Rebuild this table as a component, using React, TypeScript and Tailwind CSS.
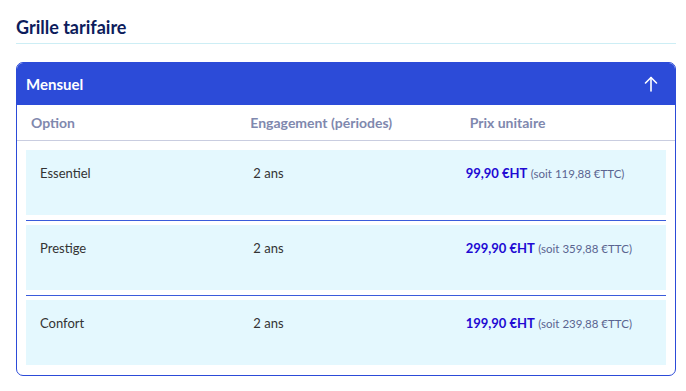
import React from "react";

type Row = { name: string; term: string; ht: string; ttc: string };

const rows: Row[] = [
  { name: "Essentiel", term: "2 ans", ht: "99,90 €HT", ttc: "(soit 119,88 €TTC)" },
  { name: "Prestige", term: "2 ans", ht: "299,90 €HT", ttc: "(soit 359,88 €TTC)" },
  { name: "Confort", term: "2 ans", ht: "199,90 €HT", ttc: "(soit 239,88 €TTC)" },
];

function ArrowUp() {
  return (
    <svg width="14" height="16" viewBox="0 0 14 16" fill="none" stroke="white" strokeWidth="1.6" strokeLinecap="round" strokeLinejoin="round">
      <path d="M7 15V1.5" />
      <path d="M1.5 7L7 1.5L12.5 7" />
    </svg>
  );
}

export default function App() {
  return (
    <div className="w-[686px] h-[391px] bg-white pl-4 pr-[10px] pt-[14px] font-['Lato',sans-serif]">
      <h2 className="text-[18px] leading-[26px] font-bold text-[#0d1c5c] pb-[3px] border-b border-[#cdeef5]">
        Grille tarifaire
      </h2>

      <div className="mt-[18px] rounded-[7px] border border-[#2c4bd8] overflow-hidden">
        <div className="h-[42px] bg-[#2c4bd8] flex items-center justify-between pl-[9px] pr-[17px]">
          <span className="text-white text-[15px] font-bold">Mensuel</span>
          <ArrowUp />
        </div>

        <div className="grid grid-cols-3 h-[36px] items-center border-b border-[#c9cde0] text-[14px] font-bold text-[#7f88ae]">
          <div className="pl-[14px]">Option</div>
          <div className="pl-[14px]">Engagement (périodes)</div>
          <div className="pl-[14px]">Prix unitaire</div>
        </div>

        <div className="px-[9px] pt-[9px] pb-[10px]">
          {rows.map((r, i) => (
            <div key={r.name}>
              <div className="grid grid-cols-3 h-[65px] bg-[#e4f8fe] pt-[15px] text-[13px] leading-[16px] text-[#333333]">
                <div className="pl-[14px]">{r.name}</div>
                <div className="pl-[14px]">{r.term}</div>
                <div className="pl-[13px] whitespace-nowrap">
                  <span className="font-bold text-[#2109d3]">{r.ht}</span>{" "}
                  <span className="text-[11.5px] text-[#5a6490]">{r.ttc}</span>
                </div>
              </div>
              {i < rows.length - 1 && <div className="mt-[5px] mb-[4px] h-px bg-[#3b5bdb]" />}
            </div>
          ))}
        </div>
      </div>
    </div>
  );
}
